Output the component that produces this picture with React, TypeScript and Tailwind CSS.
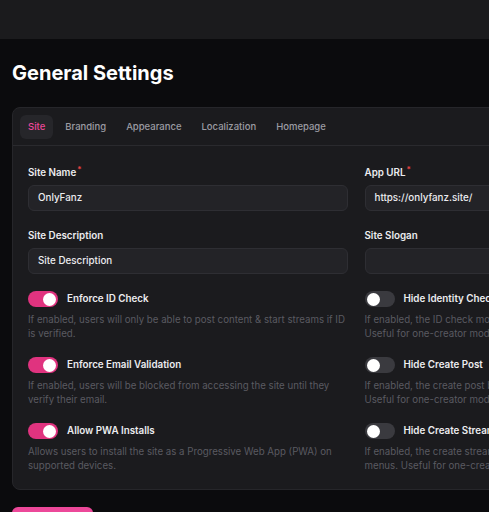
import { useState } from 'react';

const tabs = ['Site', 'Branding', 'Appearance', 'Localization', 'Homepage'];

const leftToggles = [
  {
    label: 'Enforce ID Check',
    on: true,
    text: 'If enabled, users will only be able to post content & start streams if ID is verified.',
  },
  {
    label: 'Enforce Email Validation',
    on: true,
    text: 'If enabled, users will be blocked from accessing the site until they verify their email.',
  },
  {
    label: 'Allow PWA Installs',
    on: true,
    text: 'Allows users to install the site as a Progressive Web App (PWA) on supported devices.',
  },
];

// right column copy keeps its own line breaks
const rightToggles = [
  {
    label: 'Hide Identity Check',
    on: false,
    text: 'If enabled, the ID check modal will be hidden from the user menus.\nUseful for one-creator mode.',
  },
  {
    label: 'Hide Create Post',
    on: false,
    text: 'If enabled, the create post button will be hidden from the user menus.\nUseful for one-creator mode.',
  },
  {
    label: 'Hide Create Stream',
    on: false,
    text: 'If enabled, the create stream button will be hidden from all\nmenus. Useful for one-creator mode.',
  },
];

function Toggle({ on }: { on: boolean }) {
  return (
    <span
      className={`flex h-4 w-[30px] shrink-0 items-center rounded-full px-[2px] ${
        on ? 'justify-end bg-[#e0337f]' : 'justify-start bg-[#3a3a3f]'
      }`}
    >
      <span className="h-[13px] w-[13px] rounded-full bg-white" />
    </span>
  );
}

function Field({ label, value, required }: { label: string; value: string; required?: boolean }) {
  return (
    <div className="flex flex-col">
      <label className="mb-[5px] text-[9.8px] font-semibold leading-[14px] text-[#ececef]">
        {label}
        {required && <sup className="ml-[1px] text-[8px] text-[#ef4444]">*</sup>}
      </label>
      <div className="flex h-[26px] items-center rounded-md border border-[#2e2e33] bg-[#232327] px-[9px] text-[9.8px] font-medium text-[#ececef]">
        {value}
      </div>
    </div>
  );
}

function ToggleItem({ label, on, text }: { label: string; on: boolean; text: string }) {
  return (
    <div className="flex flex-col">
      <div className="flex items-center gap-[9px]">
        <Toggle on={on} />
        <span className="whitespace-nowrap text-[9.8px] font-semibold text-[#ececef]">{label}</span>
      </div>
      <p className="mt-[6px] whitespace-pre-line text-[9.7px] leading-[14px] text-[#5a5a61]">{text}</p>
    </div>
  );
}

export default function App() {
  const [active] = useState('Site');

  return (
    <div className="h-[512px] w-[489px] overflow-hidden bg-[#0b0b0d]" style={{ fontFamily: 'Inter, "Noto Sans", sans-serif' }}>
      <div className="h-[39px] bg-[#1b1b1d]" />
      <div className="px-3">
        <h1 className="mt-[24px] text-[20px] font-bold leading-[20px] text-white">General Settings</h1>

        <div className="mt-[24px] w-[688px] rounded-lg border border-[#26262a] bg-[#1b1b1e]">
          <div className="flex gap-1 border-b border-[#2a2a2e] px-[7px] pt-[7px] pb-[6px]">
            {tabs.map((t) => (
              <span
                key={t}
                className={`flex h-6 items-center rounded-md px-2 text-[9.5px] font-medium ${
                  t === active ? 'bg-[#26262a] text-[#ec4899]' : 'text-[#9b9ba3]'
                }`}
              >
                {t}
              </span>
            ))}
          </div>

          <div className="px-[15px] pt-[20px] pb-[16px]">
            <div className="grid grid-cols-2 gap-x-[17px] gap-y-[18px]">
              <Field label="Site Name" value="OnlyFanz" required />
              <Field label="App URL" value="https://onlyfanz.site/" required />
              <Field label="Site Description" value="Site Description" />
              <Field label="Site Slogan" value="" />
            </div>

            <div className="mt-[17px] grid grid-cols-2 gap-x-[17px] gap-y-[16px]">
              {leftToggles.map((l, i) => (
                <div key={l.label} className="contents">
                  <ToggleItem {...l} />
                  <ToggleItem {...rightToggles[i]} />
                </div>
              ))}
            </div>
          </div>
        </div>

        <button className="mt-[17px] h-9 w-[81px] rounded-md bg-[#ec4899] text-[10px] font-semibold text-white">
          Save
        </button>
      </div>
    </div>
  );
}
